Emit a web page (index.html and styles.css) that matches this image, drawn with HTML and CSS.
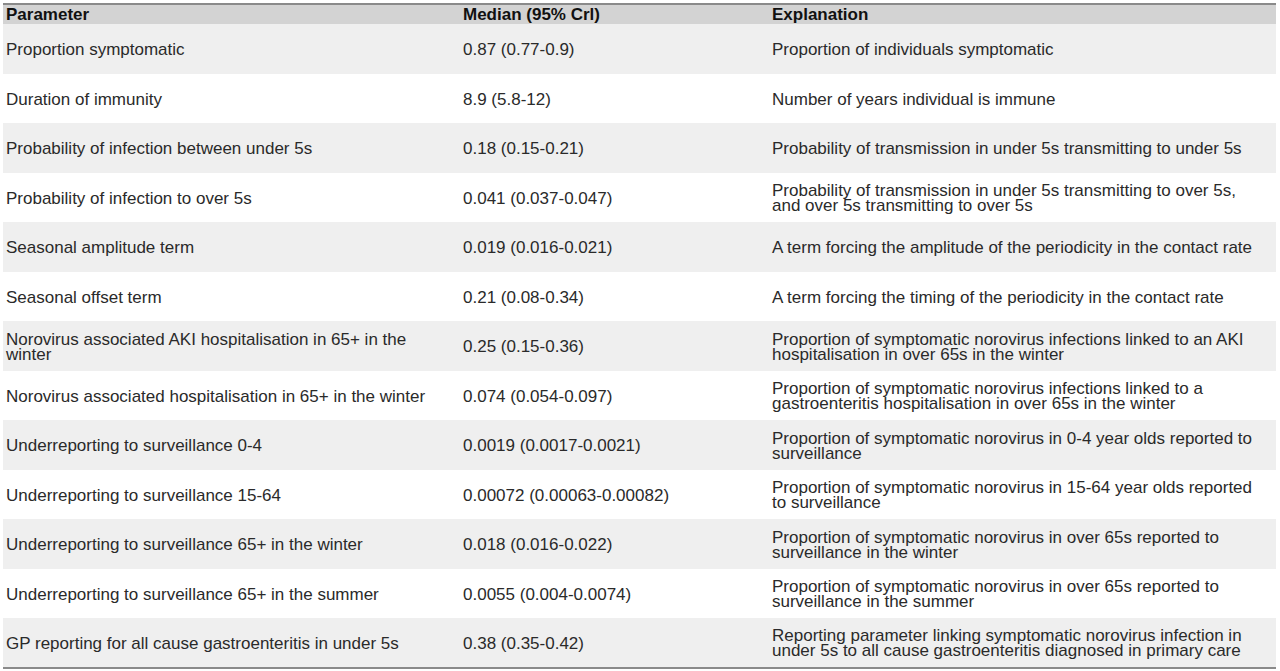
FILE: index.html
```html
<!DOCTYPE html>
<html>
<head>
<meta charset="utf-8">
<link rel="stylesheet" href="styles.css">
</head>
<body>
<table class="params">
  <colgroup>
    <col class="c1"><col class="c2"><col class="c3">
  </colgroup>
  <thead>
    <tr><th>Parameter</th><th>Median (95% Crl)</th><th>Explanation</th></tr>
  </thead>
  <tbody>
    <tr><td>Proportion symptomatic</td><td>0.87 (0.77-0.9)</td><td>Proportion of individuals symptomatic</td></tr>
    <tr><td>Duration of immunity</td><td>8.9 (5.8-12)</td><td>Number of years individual is immune</td></tr>
    <tr><td>Probability of infection between under 5s</td><td>0.18 (0.15-0.21)</td><td>Probability of transmission in under 5s transmitting to under 5s</td></tr>
    <tr><td>Probability of infection to over 5s</td><td>0.041 (0.037-0.047)</td><td>Probability of transmission in under 5s transmitting to over 5s, and over 5s transmitting to over 5s</td></tr>
    <tr><td>Seasonal amplitude term</td><td>0.019 (0.016-0.021)</td><td>A term forcing the amplitude of the periodicity in the contact rate</td></tr>
    <tr><td>Seasonal offset term</td><td>0.21 (0.08-0.34)</td><td>A term forcing the timing of the periodicity in the contact rate</td></tr>
    <tr><td>Norovirus associated AKI hospitalisation in 65+ in the winter</td><td>0.25 (0.15-0.36)</td><td>Proportion of symptomatic norovirus infections linked to an AKI hospitalisation in over 65s in the winter</td></tr>
    <tr><td>Norovirus associated hospitalisation in 65+ in the winter</td><td>0.074 (0.054-0.097)</td><td>Proportion of symptomatic norovirus infections linked to a gastroenteritis hospitalisation in over 65s in the winter</td></tr>
    <tr><td>Underreporting to surveillance 0-4</td><td>0.0019 (0.0017-0.0021)</td><td>Proportion of symptomatic norovirus in 0-4 year olds reported to surveillance</td></tr>
    <tr><td>Underreporting to surveillance 15-64</td><td>0.00072 (0.00063-0.00082)</td><td>Proportion of symptomatic norovirus in 15-64 year olds reported to surveillance</td></tr>
    <tr><td>Underreporting to surveillance 65+ in the winter</td><td>0.018 (0.016-0.022)</td><td>Proportion of symptomatic norovirus in over 65s reported to surveillance in the winter</td></tr>
    <tr><td>Underreporting to surveillance 65+ in the summer</td><td>0.0055 (0.004-0.0074)</td><td>Proportion of symptomatic norovirus in over 65s reported to surveillance in the summer</td></tr>
    <tr><td>GP reporting for all cause gastroenteritis in under 5s</td><td>0.38 (0.35-0.42)</td><td>Reporting parameter linking symptomatic norovirus infection in under 5s to all cause gastroenteritis diagnosed in primary care</td></tr>
  </tbody>
</table>
</body>
</html>
```
FILE: styles.css
```css
html, body {
  margin: 0;
  padding: 0;
  background: #ffffff;
}
body {
  padding: 3px 4px 0 3px;
  font-family: "Liberation Sans", Arial, sans-serif;
  font-size: 17px;
  color: #2a2a2a;
}
.params {
  width: 1273px;
  border-collapse: collapse;
  table-layout: fixed;
  border-top: 2px solid #8a8a8a;
  border-bottom: 2px solid #8a8a8a;
}
.c1 { width: 457px; }
.c2 { width: 309px; }
.c3 { width: 507px; }
.params th {
  background: #d3d3d3;
  color: #111111;
  font-weight: bold;
  text-align: left;
  height: 19px;
  padding: 0 10px 0 3px;
  line-height: 19px;
  vertical-align: middle;
}
.params td {
  height: 49.5px;
  padding: 2px 10px 0 3px;
  line-height: 15px;
  vertical-align: middle;
  box-sizing: border-box;
}
.params tbody tr:nth-child(odd) td {
  background: #efefef;
}
```
